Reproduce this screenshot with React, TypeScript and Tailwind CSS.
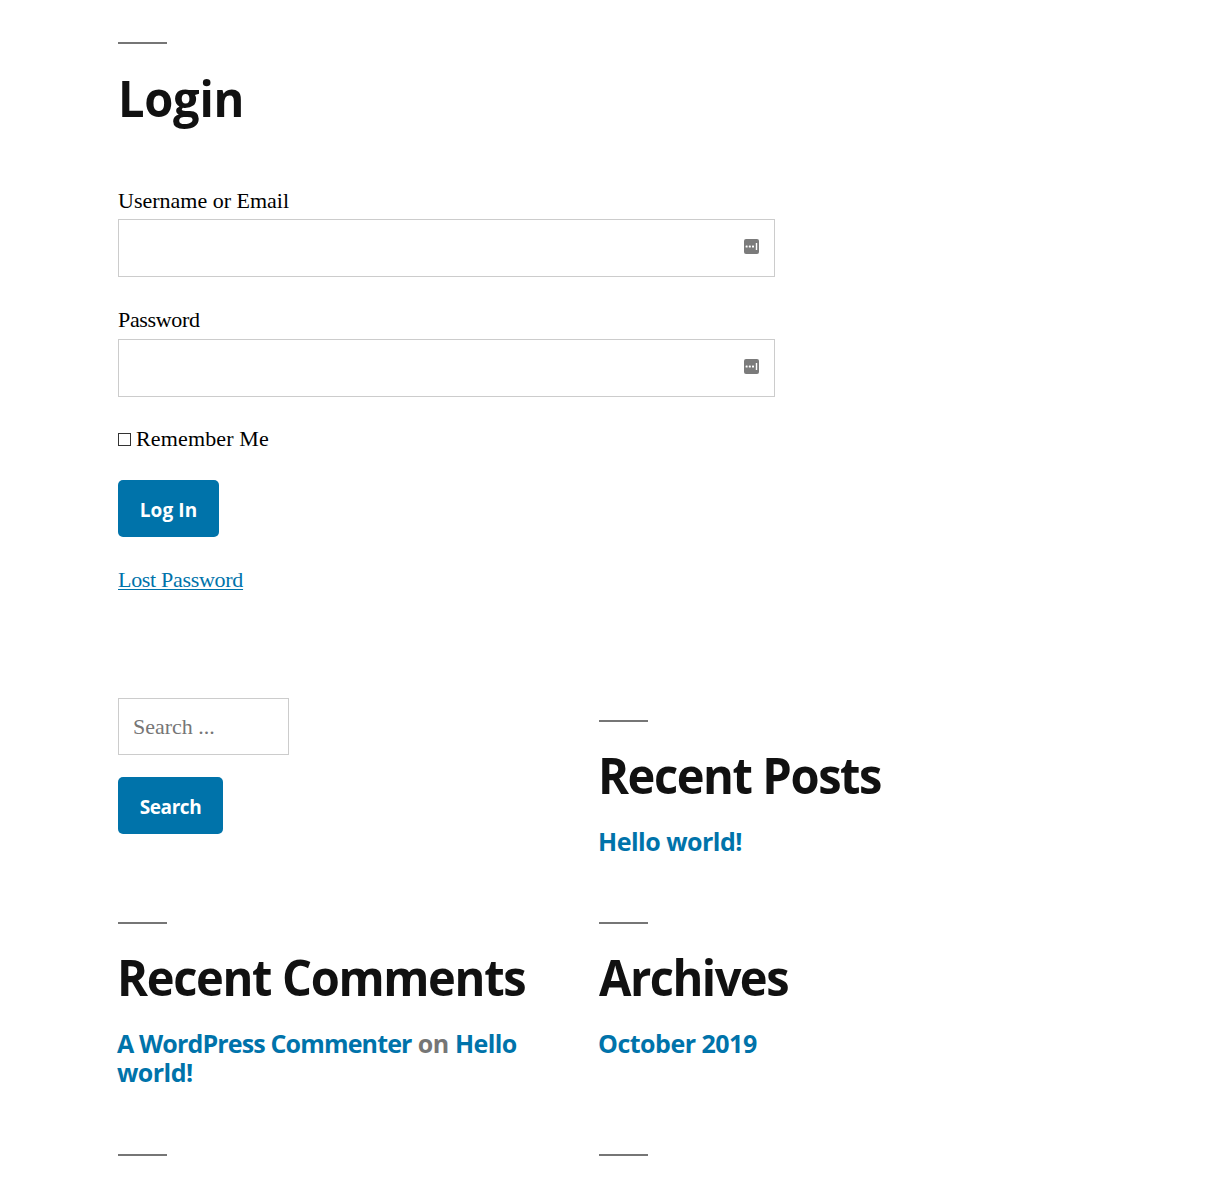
import type { ReactNode } from 'react';

function Rule() {
  return <div className="h-[2px] w-[49px] bg-[#767676]" />;
}

function Heading({ children, className }: { children: ReactNode; className: string }) {
  return (
    <h2
      className={`h-[66px] origin-left scale-x-95 whitespace-nowrap text-[49.5px] font-bold leading-[66px] ${className}`}
    >
      {children}
    </h2>
  );
}

function FieldIcon() {
  return (
    <svg className="h-[15px] w-[15px]" viewBox="0 0 15 15" aria-hidden="true">
      <rect width="15" height="15" rx="2" fill="#7b7b7b" />
      <g fill="#fff">
        <rect x="1.6" y="6.5" width="2" height="2" rx="0.5" />
        <rect x="4.8" y="6.5" width="2" height="2" rx="0.5" />
        <rect x="8" y="6.5" width="2" height="2" rx="0.5" />
        <rect x="11.8" y="4" width="1.4" height="7" />
      </g>
    </svg>
  );
}

function Field({ label, type, labelClass, boxClass }: { label: string; type: string; labelClass: string; boxClass: string }) {
  return (
    <label className="block">
      <span className={`block h-8 leading-8 ${labelClass}`}>{label}</span>
      <span className={`flex h-[58px] w-[657px] items-center border border-[#ccc] pr-[15px] ${boxClass}`}>
        <input type={type} className="h-full min-w-0 flex-1 px-[14px] outline-none" />
        <span className="-mt-1">
          <FieldIcon />
        </span>
      </span>
    </label>
  );
}

function Button({ children, className }: { children: ReactNode; className: string }) {
  return (
    <button
      className={`block h-[57px] rounded-[5px] bg-[#0073aa] pt-[3px] text-center font-['Open_Sans',sans-serif] text-[19px] font-bold text-white ${className}`}
    >
      {children}
    </button>
  );
}

const sans = "font-['Open_Sans',sans-serif] text-[#111]";
const list = '-ml-px mt-[19px] whitespace-nowrap text-[25px] font-bold leading-[29px] text-[#0073aa]';

export default function App() {
  return (
    <main className="h-[1180px] overflow-hidden bg-white pl-[118px] pt-[42px] font-['Liberation_Serif',serif] text-[22px] text-black">
      <section className="h-[656px]">
        <div className={sans}>
          <Rule />
          <Heading className="mt-[21px] tracking-[-0.3px]">Login</Heading>
        </div>
        <form className="mt-[54px]" onSubmit={(e) => e.preventDefault()}>
          <Field label="Username or Email" type="text" labelClass="" boxClass="mt-[2px]" />
          <div className="mt-[27px]">
            <Field label="Password" type="password" labelClass="tracking-[-0.35px]" boxClass="mt-[3px]" />
          </div>
          <label className="mt-[26px] flex h-8 items-center gap-[5px] leading-8">
            <input type="checkbox" className="h-[13px] w-[13px] appearance-none border border-[#333] bg-white" />
            <span className="tracking-[0.15px]">Remember Me</span>
          </label>
          <div className="mt-[25px]">
            <Button className="w-[101px] tracking-[0.1px]">Log In</Button>
          </div>
        </form>
        <a
          href="#"
          className="mt-[27px] block leading-8 tracking-[-0.3px] text-[#0073aa] underline decoration-1 underline-offset-[2px]"
        >
          Lost Password
        </a>
      </section>

      <div className="grid grid-cols-[481px_481px] grid-rows-[224px_232px_60px]">
        <form onSubmit={(e) => e.preventDefault()}>
          <input
            type="search"
            placeholder="Search ..."
            className="block h-[57px] w-[171px] border border-[#ccc] px-[14px] outline-none placeholder:text-[#767676]"
          />
          <div className="mt-[22px]">
            <Button className="w-[105px] tracking-[-0.4px]">Search</Button>
          </div>
        </form>

        <section className={`pt-[22px] ${sans}`}>
          <Rule />
          <Heading className="-ml-px mt-5 tracking-[-1.5px]">Recent Posts</Heading>
          <p className={list}>
            <a href="#" className="tracking-[-0.5px]">Hello world!</a>
          </p>
        </section>

        <section className={sans}>
          <Rule />
          <Heading className="-ml-px mt-5 tracking-[-1.4px]">Recent Comments</Heading>
          <p className={list}>
            <a href="#" className="tracking-[-0.85px]">A WordPress Commenter</a>
            <span className="tracking-[-0.4px] text-[#767676]"> on </span>
            <a href="#" className="tracking-[-0.55px]">
              Hello
              <br />
              world!
            </a>
          </p>
        </section>

        <section className={sans}>
          <Rule />
          <Heading className="mt-5 tracking-[-1.6px]">Archives</Heading>
          <p className={list}>
            <a href="#" className="tracking-[-0.5px]">October 2019</a>
          </p>
        </section>

        <Rule />
        <Rule />
      </div>
    </main>
  );
}
